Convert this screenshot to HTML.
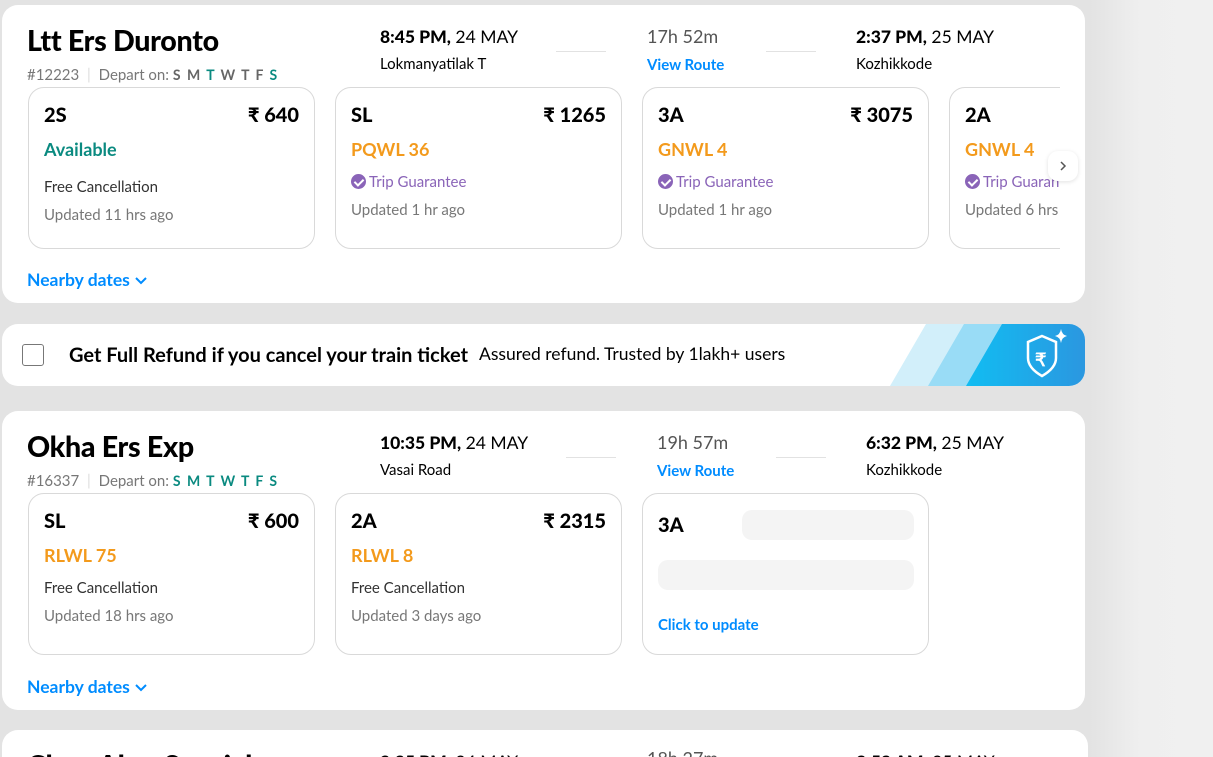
<!DOCTYPE html>
<html><head><meta charset="utf-8"><style>
*{margin:0;padding:0;box-sizing:border-box}
html,body{width:1213px;height:757px;overflow:hidden}
body{background:linear-gradient(90deg,#e3e3e3 0,#e3e3e3 1090px,#efefef 1140px,#f0f0f0 100%);font-family:"Lato","Liberation Sans",sans-serif;position:relative;color:#000}
.card{position:absolute;left:2px;width:1083px;background:#fff;border-radius:16px}
.a{position:absolute;white-space:nowrap}
.title{font-size:28.6px;font-weight:900;letter-spacing:-0.3px}
.num{font-size:15px;color:#777}
.days{font-size:14px;font-weight:bold;color:#666;letter-spacing:1.5px}
.t{font-size:17.5px}
.t b{font-weight:900}
.st{font-size:15px}
.dur{font-size:18px;color:#555}
.vr{font-size:15px;font-weight:bold;color:#008cff}
.ln{position:absolute;height:1px;width:50px;background:#e2e2e2}
.cc{position:absolute;width:287px;height:162px;border:1px solid #d9d9d9;border-radius:16px;background:#fff;overflow:hidden}
.cc .cl{position:absolute;left:15px;top:15px;font-size:20px;font-weight:900}
.cc .pr{position:absolute;right:15px;top:15px;font-size:20px;font-weight:900}
.cc .s{position:absolute;left:15px;top:50px;font-size:18px;font-weight:bold}
.g{color:#0a8a80}.o{color:#f39a1c}
.cc .l3{position:absolute;left:15px;font-size:15px;color:#333}
.cc .l4{position:absolute;left:15px;font-size:15px;color:#777}
.cc .tg{color:#8a64b8}
.chk{display:inline-block;width:15px;height:15px;border-radius:50%;background:#8a64b8;vertical-align:-2px;margin-right:3px;position:relative}
.chk:after{content:"";position:absolute;left:5px;top:3px;width:4px;height:7px;border:solid #fff;border-width:0 2px 2px 0;transform:rotate(45deg)}
.nd{font-size:17.5px;font-weight:bold;color:#008cff}
.sk{position:absolute;background:#f4f4f4;border-radius:10px}
</style></head><body>

<div class="card" style="top:5px;height:298px">
 <div class="a title" style="left:25px;top:19px">Ltt Ers Duronto</div>
 <div class="a num" style="left:25px;top:61px">#12223 <span style="color:#ddd;margin:0 4px">|</span> Depart on: <span class="days">S M <span style="color:#0a8a80">T</span> W T F <span style="color:#0a8a80">S</span></span></div>
 <div class="a t" style="left:378px;top:21px"><b>8:45 PM,</b> 24 MAY</div>
 <div class="a st" style="left:378px;top:50px">Lokmanyatilak T</div>
 <div class="ln" style="left:554px;top:46px"></div>
 <div class="a dur" style="left:645px;top:20px">17h 52m</div>
 <div class="a vr" style="left:645px;top:51px">View Route</div>
 <div class="ln" style="left:764px;top:46px"></div>
 <div class="a t" style="left:854px;top:21px"><b>2:37 PM,</b> 25 MAY</div>
 <div class="a st" style="left:854px;top:50px">Kozhikkode</div>

 <div class="cc" style="left:26px;top:82px"><div class="cl">2S</div><div class="pr">₹ 640</div><div class="s g">Available</div><div class="l3" style="top:90px">Free Cancellation</div><div class="l4" style="top:118px">Updated 11 hrs ago</div></div>
 <div class="cc" style="left:333px;top:82px"><div class="cl">SL</div><div class="pr">₹ 1265</div><div class="s o">PQWL 36</div><div class="l3 tg" style="top:85px"><span class="chk"></span>Trip Guarantee</div><div class="l4" style="top:113px">Updated 1 hr ago</div></div>
 <div class="cc" style="left:640px;top:82px"><div class="cl">3A</div><div class="pr">₹ 3075</div><div class="s o">GNWL 4</div><div class="l3 tg" style="top:85px"><span class="chk"></span>Trip Guarantee</div><div class="l4" style="top:113px">Updated 1 hr ago</div></div>
 <div style="position:absolute;left:947px;top:82px;width:111px;height:162px;overflow:hidden">
 <div class="cc" style="left:0;top:0"><div class="cl">2A</div><div class="s o">GNWL 4</div><div class="l3 tg" style="top:85px"><span class="chk"></span>Trip Guarantee</div><div class="l4" style="top:113px">Updated 6 hrs ago</div></div></div>
 <div class="a" style="left:1046px;top:146px;width:30px;height:30px;border-radius:10px;background:#fff;box-shadow:0 1px 4px rgba(0,0,0,.12)"><svg width="30" height="30"><path d="M13 11 L17 15 L13 19" fill="none" stroke="#555" stroke-width="1.5"/></svg></div>
 <div class="a nd" style="left:25px;top:264px">Nearby dates <svg width="14" height="10" style="vertical-align:0"><path d="M2 2 L7 7 L12 2" fill="none" stroke="#008cff" stroke-width="2"/></svg></div>
</div>

<div class="card" style="top:324px;height:62px;overflow:hidden">
 <div class="a" style="left:20px;top:20px;width:22px;height:22px;border:1.5px solid #777;border-radius:3px"></div>
 <div class="a" style="left:67px;top:19px;font-size:20px;font-weight:bold">Get Full Refund if you cancel your train ticket</div>
 <div class="a" style="left:477px;top:19px;font-size:17.5px">Assured refund. Trusted by 1lakh+ users</div>
 <svg class="a" style="left:888px;top:0" width="195" height="62" viewBox="0 0 195 62">
  <defs><linearGradient id="bg" x1="0" x2="1"><stop offset="0" stop-color="#11bdf2"/><stop offset="1" stop-color="#2b97e0"/></linearGradient></defs>
  <polygon points="36,0 80,0 44,62 0,62" fill="#d2effa"/>
  <polygon points="74,0 118,0 82,62 38,62" fill="#99dcf6"/>
  <polygon points="112,0 195,0 195,62 76,62" fill="url(#bg)"/>
  <path d="M152 12 L166 18 L166 34 Q166 44 152 52 Q138 44 138 34 L138 18 Z" fill="none" stroke="#fff" stroke-width="2.5"/>
  <text x="145" y="42" font-size="18" font-weight="bold" fill="#fff" font-family="Liberation Sans">₹</text>
  <path d="M171 5 Q172 11 177 12 Q172 13 171 19 Q170 13 165 12 Q170 11 171 5Z" fill="#fff"/>
 </svg>
</div>

<div class="card" style="top:411px;height:299px">
 <div class="a title" style="left:25px;top:19px">Okha Ers Exp</div>
 <div class="a num" style="left:25px;top:61px">#16337 <span style="color:#ddd;margin:0 4px">|</span> Depart on: <span class="days" style="color:#0a8a80">S M T W T F S</span></div>
 <div class="a t" style="left:378px;top:21px"><b>10:35 PM,</b> 24 MAY</div>
 <div class="a st" style="left:378px;top:50px">Vasai Road</div>
 <div class="ln" style="left:564px;top:46px"></div>
 <div class="a dur" style="left:655px;top:20px">19h 57m</div>
 <div class="a vr" style="left:655px;top:51px">View Route</div>
 <div class="ln" style="left:774px;top:46px"></div>
 <div class="a t" style="left:864px;top:21px"><b>6:32 PM,</b> 25 MAY</div>
 <div class="a st" style="left:864px;top:50px">Kozhikkode</div>

 <div class="cc" style="left:26px;top:82px"><div class="cl">SL</div><div class="pr">₹ 600</div><div class="s o">RLWL 75</div><div class="l3" style="top:85px">Free Cancellation</div><div class="l4" style="top:113px">Updated 18 hrs ago</div></div>
 <div class="cc" style="left:333px;top:82px"><div class="cl">2A</div><div class="pr">₹ 2315</div><div class="s o">RLWL 8</div><div class="l3" style="top:85px">Free Cancellation</div><div class="l4" style="top:113px">Updated 3 days ago</div></div>
 <div class="cc" style="left:640px;top:82px"><div class="cl" style="top:19px">3A</div><div class="sk" style="left:99px;top:16px;width:172px;height:30px"></div><div class="sk" style="left:15px;top:66px;width:256px;height:30px"></div><div class="a vr" style="left:15px;top:122px">Click to update</div></div>
 <div class="a nd" style="left:25px;top:265px">Nearby dates <svg width="14" height="10" style="vertical-align:0"><path d="M2 2 L7 7 L12 2" fill="none" stroke="#008cff" stroke-width="2"/></svg></div>
</div>

<div class="card" style="top:730px;height:60px;width:1086px">
 <div class="a title" style="left:25px;top:19px">Chen Ahm Special</div>
 <div class="a t" style="left:378px;top:21px"><b>9:25 PM,</b> 24 MAY</div>
 <div class="a dur" style="left:645px;top:17px">18h 27m</div>
 <div class="a t" style="left:854px;top:21px"><b>3:52 AM,</b> 25 MAY</div>
</div>
</body></html>
